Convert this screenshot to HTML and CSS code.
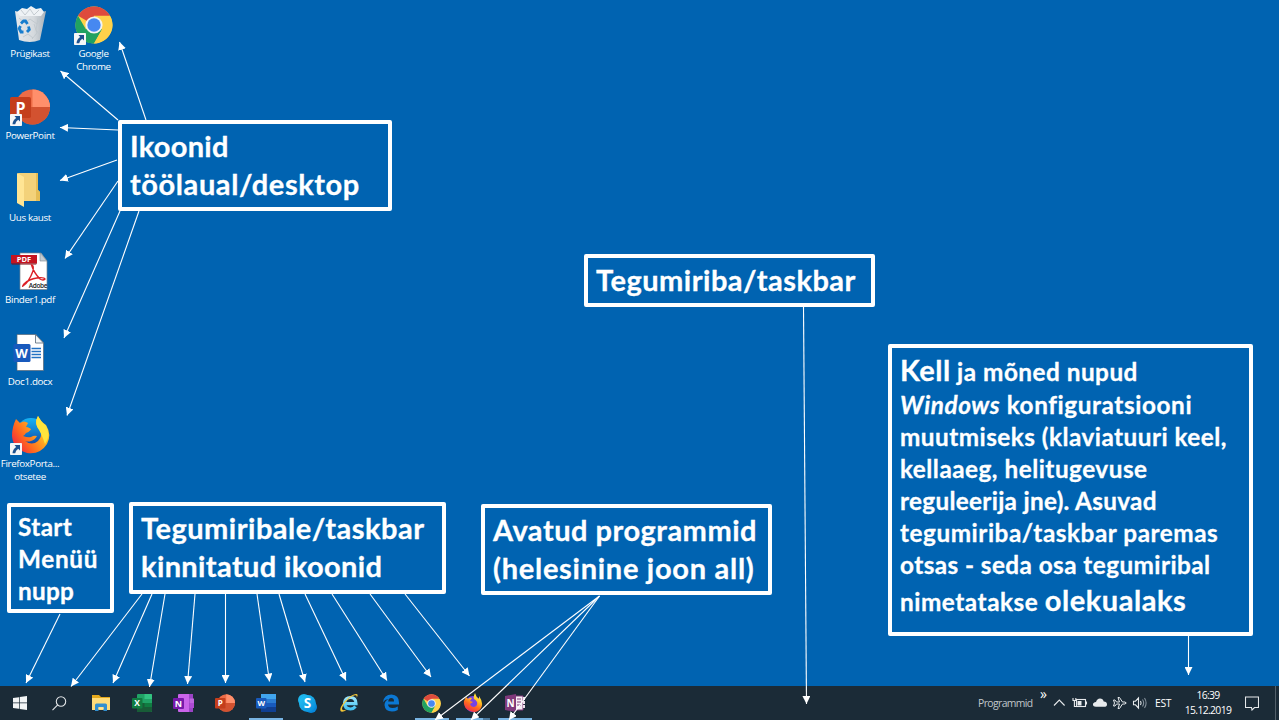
FILE: index.html
```html
<!DOCTYPE html>
<html lang="et">
<head>
<meta charset="utf-8">
<title>Windowsi töölaud</title>
<link rel="stylesheet" href="styles.css">
</head>
<body>
<svg class="defs" width="0" height="0">
  <defs>
    <linearGradient id="ffA" x1=".8" y1="0" x2=".3" y2="1"><stop offset="0" stop-color="#fff04a"/><stop offset=".35" stop-color="#ffc524"/><stop offset=".65" stop-color="#ff6a1f"/><stop offset="1" stop-color="#f02a50"/></linearGradient>
    <linearGradient id="ffC" x1="1" y1="0" x2="0" y2=".7"><stop offset="0" stop-color="#fff04a"/><stop offset=".4" stop-color="#ffb020"/><stop offset=".75" stop-color="#ff6420"/><stop offset="1" stop-color="#f02a40"/></linearGradient>
    <linearGradient id="ffB" x1="0" y1="0" x2="0" y2="1"><stop offset="0" stop-color="#15b4f5"/><stop offset="1" stop-color="#123c9c"/></linearGradient>
    <linearGradient id="bin" x1="0" y1="0" x2="1" y2="0"><stop offset="0" stop-color="#e4e8ec"/><stop offset=".6" stop-color="#d5dade"/><stop offset="1" stop-color="#a9b2ba"/></linearGradient>
    <linearGradient id="ieB" x1="0" y1="0" x2="0" y2="1"><stop offset="0" stop-color="#9ae4fb"/><stop offset="1" stop-color="#45c3f3"/></linearGradient>
    <linearGradient id="sk" x1="0" y1="0" x2="1" y2="1"><stop offset="0" stop-color="#25c5f5"/><stop offset="1" stop-color="#0587d8"/></linearGradient>
    <marker id="head" viewBox="0 0 8 8" refX="8" refY="4" markerWidth="8" markerHeight="8" markerUnits="userSpaceOnUse" orient="auto"><path d="M0 0L8 4L0 8z" fill="#fff"/></marker>
    <symbol id="chrome" viewBox="0 0 38 38">
      <circle cx="19" cy="19" r="18.500" fill="#ffd24a"/>
      <path d="M19 19L3 9.700A18.500 18.500 0 0 1 35 9.700H19z" fill="#de4b3d"/>
      <path d="M3 9.700A18.500 18.500 0 0 0 19 37.500L27 23.500L19 19L11 23.500z" fill="#20a261"/>
      <path d="M19 10.500H35.400A18.500 18.500 0 0 1 19 37.500L27 23.500z" fill="#ffd24a"/>
      <circle cx="19" cy="19" r="8.600" fill="#f3f3f3"/><circle cx="19" cy="19" r="6.700" fill="#4688f1"/>
    </symbol>
    <symbol id="ppt" viewBox="0 0 40 36">
      <circle cx="22.500" cy="18" r="17.500" fill="#ed6c47"/>
      <path d="M22.500 .5A17.500 17.500 0 0 1 40 18H22.500z" fill="#ff8f6b"/>
      <path d="M5 18H40A17.500 17.500 0 0 1 5 18z" fill="#d35230"/>
      <rect x="0" y="8" width="21" height="21" rx="1.800" fill="#c43e1c"/>
      <text x="10.500" y="24.500" text-anchor="middle" class="glyph" font-size="16">P</text>
    </symbol>
    <symbol id="shortcut" viewBox="0 0 12 12">
      <rect width="12" height="12" rx=".8" fill="#f5f6f7"/>
      <path d="M4.500 2H10V7.500L8.200 5.800Q5.600 7.500 5.200 10.300H2.500Q2.700 6.200 6.200 3.900z" fill="#1d5290"/>
    </symbol>
  </defs>
</svg>

<main class="desktop">
  <div class="icons">
    <div class="icon-column">
      <div class="shortcut">
        <svg class="pic" viewBox="0 0 40 38">
          <path d="M5 5L9 34Q20 38 30 34L36 5Q20 10 5 5z" fill="url(#bin)"/>
          <path d="M7 6L12 2L17 3L21 0L26 3L31 2L34 6L31 10H10z" fill="#eef2f5"/>
          <path d="M11 4l4 5 5-6 4 6 5-5M9 12l6 5 5-4 7 5 4-6M24 18l3 9-5 6M13 31l5-3 5 4M28 12l-2 12 4 5" fill="none" stroke="#c0c7cd" stroke-width=".9"/>
          <path d="M11 17.500L13.500 15H15.500L17.500 18M18.500 20.500L19.300 23.500L17 26M13.500 26H11L9.200 22.500L10.500 20" fill="none" stroke="#167dce" stroke-width="2.800"/>
        </svg>
        <span class="name">Prügikast</span>
      </div>
      <div class="shortcut">
        <svg class="pic" viewBox="0 0 40 38"><use href="#ppt" x="0" y="1" width="40" height="36"/><use href="#shortcut" x="0" y="26" width="12" height="12"/></svg>
        <span class="name">PowerPoint</span>
      </div>
      <div class="shortcut">
        <svg class="pic" viewBox="0 0 40 38">
          <path d="M8 3H28V20L30 22V31H12z" fill="#f3d27a"/><path d="M26 3H28V20L30 22V31H26z" fill="#e5bd55"/>
          <path d="M7 3L14 7V37L7 33z" fill="#ffe594"/>
        </svg>
        <span class="name">Uus kaust</span>
      </div>
      <div class="shortcut">
        <svg class="pic" viewBox="0 0 40 38">
          <path d="M10 1H31L37 9V37.500H10z" fill="#fff" stroke="#7b8791" stroke-width=".7"/>
          <path d="M30 1V9H37z" fill="#c4ccd3" stroke="#7b8791" stroke-width=".6"/>
          <path d="M1 3H27V11.500H1z" fill="#c51420"/><path d="M1 11.500H27L26 12.500H2z" fill="#780a12"/>
          <text x="14" y="10.200" text-anchor="middle" class="glyph" font-size="7.500">PDF</text>
          <path d="M21.500 13Q24 21 30 27Q33 29 35 27Q34 25 27 26Q19 27 14 32Q12 35 13 34Q19 30 23 19Q24 13 21.500 13z" fill="none" stroke="#dc2026" stroke-width="1.400"/>
          <text x="28" y="35.800" text-anchor="middle" class="adobe">Adobe</text>
        </svg>
        <span class="name">Binder1.pdf</span>
      </div>
      <div class="shortcut">
        <svg class="pic" viewBox="0 0 40 38">
          <path d="M7 .5H26L33.500 9V36.500H7z" fill="#fff" stroke="#566777" stroke-width=".7"/><path d="M25.500 .5V9H33.500z" fill="#f5f7f8" stroke="#566777" stroke-width=".8"/>
          <path d="M21.500 14.500H31M21.500 17.500H31M21.500 20.500H31M21.500 23.500H31" stroke="#2272c3" stroke-width="1.300"/>
          <rect x="3.500" y="10" width="17" height="18" rx="1.500" fill="#185abd"/>
          <text x="11.600" y="23.700" text-anchor="middle" class="glyph" font-size="13">W</text>
        </svg>
        <span class="name">Doc1.docx</span>
      </div>
      <div class="shortcut">
        <svg class="pic" viewBox="0 0 40 38">
          <circle cx="21" cy="17" r="15" fill="url(#ffB)"/>
          <path d="M6 3Q8 5 10 7Q14 4 18 7L16 11Q20 11.500 21 13.500Q19 16 16 17Q14 20 13 20Q18 22 21 21Q24 19 27 20Q25 24 21 25Q18 26 15 25Q22 30 28 25Q33 20 30 14Q23 8 28 0Q31 6 36 9Q42 19 37 28Q30 39 17 37Q3 33 2 20Q2 11 6 3z" fill="url(#ffC)"/>
          <path d="M28 0Q31 6 36 10Q41 20 35 28Q32 19 29 14Q24 7 28 0z" fill="#ffe53c"/>
          <use href="#shortcut" x="0" y="27" width="12" height="12"/>
        </svg>
        <span class="name">FirefoxPorta...<br>otsetee</span>
      </div>
    </div>
    <div class="icon-column">
      <div class="shortcut">
        <svg class="pic" viewBox="0 0 40 38"><use href="#chrome" x="1" y="0" width="38" height="38"/><use href="#shortcut" x="0" y="27" width="12" height="12"/></svg>
        <span class="name">Google<br>Chrome</span>
      </div>
    </div>
  </div>

  <section class="note note-icons"><span class="line i1">Ikoonid</span><span class="line i2">töölaual/desktop</span></section>
  <section class="note note-taskbar"><span class="line t1">Tegumiriba/taskbar</span></section>
  <section class="note note-start"><span class="line s1">Start</span><span class="line s2">Menüü</span><span class="line s3">nupp</span></section>
  <section class="note note-pinned"><span class="line p1">Tegumiribale/taskbar</span><span class="line p2">kinnitatud ikoonid</span></section>
  <section class="note note-open"><span class="line o1">Avatud programmid</span><span class="line o2">(helesinine joon all)</span></section>
  <section class="note note-clock">
    <span class="line k1"><b class="big">Kell</b> ja mõned nupud</span>
    <span class="line k2"><i>Windows</i> konfiguratsiooni</span>
    <span class="line k3">muutmiseks (klaviatuuri keel,</span>
    <span class="line k4">kellaaeg, helitugevuse</span>
    <span class="line k5">reguleerija jne). Asuvad</span>
    <span class="line k6">tegumiriba/taskbar paremas</span>
    <span class="line k7">otsas - seda osa tegumiribal</span>
    <span class="line k8">nimetatakse <b class="big">olekualaks</b></span>
  </section>
</main>

<footer class="taskbar">
  <nav class="apps">
    <div class="app start"><svg width="14" height="14" viewBox="0 0 14 14"><path d="M0 2L6 1.200V6.600H0zM6.700 1.100L14 0V6.600H6.700zM0 7.300H6V12.800L0 12zM6.700 7.300H14V14L6.700 12.900z" fill="#f2f4f5"/></svg></div>
    <div class="app"><svg width="15" height="15" viewBox="0 0 15 15" fill="none" stroke="#e2e5e7" stroke-width="1.100"><circle cx="9" cy="5.500" r="4.700"/><path d="M5.700 8.900L.5 14.200"/></svg></div>
    <div class="app"><svg width="20" height="18" viewBox="0 0 20 18"><path d="M1 1H8L10 3H19V8H1z" fill="#e5a91c"/><path d="M1 4H19V16H1z" fill="#ffdc7a"/><path d="M4 17V11Q4 9.500 5.500 9.500H14.500Q16 9.500 16 11V17H12.500V13H7.500V17z" fill="#318fd0"/><path d="M7.500 13.500H12.500V15H7.500z" fill="#ffe69b"/></svg></div>
    <div class="app"><svg width="20" height="18" viewBox="0 0 20 18"><rect x="5" width="15" height="18" rx="1" fill="#21a366"/><path d="M12.500 0H19Q20 0 20 1V5H12.500z" fill="#33c481"/><path d="M5 9H20V17Q20 18 19 18H5z" fill="#185c37"/><path d="M12.500 9H20V13H12.500z" fill="#107c41"/><rect y="4" width="10.500" height="10.500" rx="1" fill="#107c41"/><text x="5.200" y="12.200" text-anchor="middle" class="glyph" font-size="8.500">X</text></svg></div>
    <div class="app"><svg width="21" height="18" viewBox="0 0 21 18"><rect x="5" width="14" height="18" rx="1" fill="#ca64ea"/><path d="M16 0H20V18H16z" fill="#9b43c6"/><path d="M16.500 4.500H21V9H16.500z" fill="#bd65df"/><path d="M16.500 9H21V14H16.500z" fill="#ae4bd5"/><rect y="4" width="11" height="11" rx="1" fill="#7719aa"/><text x="5.500" y="12.700" text-anchor="middle" class="glyph" font-size="9">N</text></svg></div>
    <div class="app"><svg width="20" height="18"><use href="#ppt" width="20" height="18"/></svg></div>
    <div class="app running"><svg width="20" height="18" viewBox="0 0 20 18"><rect x="5" width="15" height="18" rx="1" fill="#2b7cd3"/><path d="M5 0H20V5H5z" fill="#41a5ee"/><path d="M5 13H20V18H5z" fill="#103f91"/><path d="M5 9H20V13H5z" fill="#185abd"/><rect y="4" width="10.500" height="10.500" rx="1" fill="#185abd"/><text x="5.200" y="12" text-anchor="middle" class="glyph" font-size="7.800">W</text></svg></div>
    <div class="app"><svg width="19" height="19" viewBox="0 0 19 19"><circle cx="6" cy="6" r="6" fill="url(#sk)"/><circle cx="13" cy="13" r="6" fill="#0787db"/><circle cx="9.500" cy="9.500" r="8.500" fill="url(#sk)"/><text x="9.500" y="14.400" text-anchor="middle" class="glyph" font-size="13.500">S</text></svg></div>
    <div class="app"><svg width="21" height="20" viewBox="0 0 21 20"><path d="M16.500 13.500Q14.500 16 11.500 16Q5.500 16 5.500 10Q6 4.500 11.500 4.500Q17 4.500 17 10.700H7" fill="none" stroke="url(#ieB)" stroke-width="3.200"/><path d="M17.500 5Q20 1 17 1Q13 1 6 8Q0 15 1.500 18Q3 20 8 16.500Q3 18 3 16Q3 13 8 7.500Q13 2.500 16 2.300Q18.500 2 17.500 5z" fill="#f7c835"/></svg></div>
    <div class="app"><svg width="18" height="18" viewBox="0 0 18 18"><path d="M1 8.200Q2 .5 9.500 .5Q17 1 17 8.500V10.500H6Q6.500 14 10.500 14Q13 14 15.800 12.500V16Q13 17.500 10 17.500Q3 17.500 2.500 11Q2.500 7 6.500 5Q2.500 5.500 1 8.200zM6.200 7.400H12Q12 4.100 9.200 4.100Q6.700 4.100 6.200 7.400z" fill="#0b78d4" fill-rule="evenodd"/></svg></div>
    <div class="app running"><svg width="19" height="19"><use href="#chrome" width="19" height="19"/></svg></div>
    <div class="app running grouped"><svg width="20" height="20" viewBox="0 0 20 20"><circle cx="10" cy="11" r="8" fill="#7542e5"/><path d="M3 4L5 6Q7 4 9 5L7 8L10 9L7 11Q8 14 11 14Q15 13 14 9Q13 7 11 6Q10 4 12 0Q13 4 16 6V3Q21 10 18 15Q14 21 7 18Q0 15 1 8z" fill="url(#ffA)"/></svg></div>
    <div class="app running"><svg width="20" height="18" viewBox="0 0 20 18"><path d="M10 2H18V16H10z" fill="#f6edf4" stroke="#80397b"/><path d="M12 5H16M12 8H16M12 11H16" stroke="#80397b"/><path d="M18 3H20V6H18zM18 7H20V10H18zM18 11H20V14H18z" fill="#eee0ec"/><path d="M0 2L11 0V18L0 16z" fill="#80397b"/><text x="5.500" y="12.700" text-anchor="middle" class="glyph" font-size="10">N</text></svg></div>
  </nav>
  <div class="tray">
    <span class="toolbar-name">Programmid</span>
    <span class="more">»</span>
    <svg class="tray-art" width="96" height="18" viewBox="0 0 96 18" fill="none" stroke="#e7eaec" stroke-width="1.100">
      <path d="M1 11.500L6.300 6L11.600 11.500"/>
      <rect x="23.500" y="5.500" width="9" height="7"/><path d="M33.500 7.500V10.500M20 4V6.500H22.800V4M21.400 7V12.500H23"/><path d="M24.500 7H28.500V11.500H24.500z" fill="#e7eaec" stroke="none"/>
      <path d="M43 12.800Q39.500 12.800 40 9.800Q41 7.900 43 8Q44 4.500 47 4.500Q50 4.500 50.700 7.500Q54 7.500 54 10.500Q54 12.800 51 12.800z" fill="#e7eaec" stroke="none"/>
      <path d="M60.500 6H62L63.500 8H66.500L65 3.500H66.500L69.500 8H72Q74.500 9 72 10H69.500L66.500 14.500H65L66.500 10H63.500L62 12H60.500L61.500 9z" stroke-width="1"/>
      <path d="M80.500 7.200H82.500L85.500 4V14L82.500 10.800H80.500zM87.500 7Q88.700 9 87.500 11"/><path d="M89.500 5.500Q91.800 9 89.500 12.500M91.500 4Q94.700 9 91.500 14" stroke="#84909a"/>
    </svg>
    <span class="lang">EST</span>
    <div class="clock"><span>16:39</span><span>15.12.2019</span></div>
    <svg class="bubble" width="14" height="15" viewBox="0 0 14 15"><path d="M.5 1H13.500V11.500H9.500L7 14L6.500 11.500H.5z" fill="none" stroke="#e5e8ea" stroke-width="1.100"/></svg>
  </div>
</footer>

<svg class="arrows" width="1280" height="720" viewBox="0 0 1280 720">
  <g fill="none" stroke="#fff" stroke-width="1.100">
    <path marker-end="url(#head)" d="M118 120L60.500 71"/><path marker-end="url(#head)" d="M118 130L60 127.500"/><path marker-end="url(#head)" d="M117 160L60 180.500"/>
    <path marker-end="url(#head)" d="M118 181L65 258.500"/><path marker-end="url(#head)" d="M120 211L64 338"/><path marker-end="url(#head)" d="M139 211L67 415.500"/><path marker-end="url(#head)" d="M146 120L119.500 42"/>
    <path marker-end="url(#head)" d="M60 614L26 683"/>
    <path marker-end="url(#head)" d="M142 594L71 686.500"/><path marker-end="url(#head)" d="M152 594L113 683"/><path marker-end="url(#head)" d="M165 594L149.500 687"/><path marker-end="url(#head)" d="M195 594L187.500 684"/><path marker-end="url(#head)" d="M225.500 594V683"/>
    <path marker-end="url(#head)" d="M257 594L269.500 681.500"/><path marker-end="url(#head)" d="M279 594L305 682"/><path marker-end="url(#head)" d="M305 594L346 680.500"/><path marker-end="url(#head)" d="M332 594L387 680.500"/><path marker-end="url(#head)" d="M370 594L431 677"/><path marker-end="url(#head)" d="M405 594L469.500 676"/>
    <path marker-end="url(#head)" d="M599.500 596L435 720"/><path marker-end="url(#head)" d="M599.500 596L471 720"/><path marker-end="url(#head)" d="M599.500 596L509 720"/>
    <path marker-end="url(#head)" d="M803.500 307L806.500 704"/><path marker-end="url(#head)" d="M1188.500 636V675"/>
  </g>
</svg>
</body>
</html>
```
FILE: styles.css
```css
* { box-sizing: border-box; }
body {
  margin: 0;
  width: 1280px;
  height: 720px;
  overflow: hidden;
  display: flex;
  flex-direction: column;
  position: relative;
  background: #0063b1;
  border-right: 1px solid #fff;
  color: #fff;
  font-family: "Open Sans", "Noto Sans", sans-serif;
}
.defs { position: absolute; }
.glyph { fill: #fff; font-family: "Open Sans", sans-serif; font-weight: 700; letter-spacing: 0; }
.adobe { fill: #222; font-family: "Open Sans", sans-serif; font-weight: 600; font-size: 6.5px; letter-spacing: -.3px; }

.desktop { flex: 1; min-height: 0; position: relative; }
.icons { display: flex; gap: 4px; padding-top: 6px; }
.icon-column { width: 60px; display: flex; flex-direction: column; }
.icon-column + .icon-column { width: 59px; }
.shortcut { height: 82px; display: flex; flex-direction: column; align-items: center; }
.pic { width: 40px; height: 38px; flex: none; overflow: visible; }
.name {
  margin-top: 3px;
  font-size: 9.8px;
  line-height: 13px;
  letter-spacing: -.35px;
  text-align: center;
  white-space: nowrap;
}

.note {
  position: absolute;
  border: 4px solid #fff;
  border-radius: 2px;
  font-family: Lato, sans-serif;
  font-weight: 700;
  -webkit-text-stroke: .3px #fff;
}
.line { display: block; width: max-content; white-space: nowrap; }
.note-icons, .note-taskbar, .note-pinned, .note-open { padding: 3px 8px; font-size: 29px; line-height: 38px; }
.note-icons { left: 118px; top: 120px; width: 274px; height: 91px; }
.note-taskbar { left: 584px; top: 254px; width: 291px; height: 53px; }
.note-pinned { left: 129px; top: 502px; width: 317px; height: 92px; }
.note-open { left: 481px; top: 504px; width: 291px; height: 91px; }
.note-start { left: 7px; top: 503px; width: 107px; height: 110px; padding: 4px 7px; font-size: 24.3px; line-height: 32px; }
.note-clock { left: 888px; top: 344px; width: 365px; height: 292px; padding: 3px 8px; font-size: 24.3px; line-height: 32px; }
.big { font-size: 29px; line-height: 38px; font-weight: 700; }

.i1 { letter-spacing: .3px; }
.i2 { letter-spacing: .6px; }
.t1, .p1, .o1 { letter-spacing: .5px; }
.p2 { letter-spacing: .38px; }
.o2 { letter-spacing: .72px; }
.s1 { letter-spacing: .4px; }
.s2 { letter-spacing: .7px; }
.s3 { letter-spacing: .25px; }
.k1 { letter-spacing: .5px; }
.k2 { letter-spacing: .6px; }
.k3 { letter-spacing: .48px; }
.k4 { letter-spacing: .5px; }
.k5 { letter-spacing: .3px; }
.k6 { letter-spacing: .55px; }
.k7 { letter-spacing: .44px; }
.k8 { letter-spacing: .55px; }

.taskbar {
  height: 34px;
  flex: none;
  display: flex;
  justify-content: space-between;
  background: #1b2b37;
}
.apps { display: flex; padding-left: .5px; }
.app {
  width: 41.36px;
  display: flex;
  align-items: center;
  justify-content: center;
  border-bottom: 2px solid transparent;
  background-clip: padding-box;
  padding-top: 2px;
}
.start { width: 38.5px; }
.running { background: linear-gradient(#78b4e3, #78b4e3) center bottom / 34px 2px no-repeat border-box; }
.grouped { background-image: linear-gradient(90deg, #78b4e3 27px, #4d7ba0 27px); }
.tray {
  display: flex;
  align-items: center;
  padding-right: 3px;
  border-right: 1px solid #53606a;
  margin-right: 3px;
  font-size: 10.4px;
}
.toolbar-name { color: #c1c7cb; width: 62px; letter-spacing: -.6px; }
.more { font-size: 14px; line-height: 14px; width: 14px; margin-top: -18px; }
.tray-art { margin-left: -1px; }
.lang { margin-left: 6px; width: 27px; letter-spacing: -.3px; }
.clock { width: 52px; display: flex; flex-direction: column; align-items: center; line-height: 15px; letter-spacing: -.65px; }
.bubble { margin: 0 13px 0 11px; }

.arrows { position: absolute; left: 0; top: 0; pointer-events: none; }
```
